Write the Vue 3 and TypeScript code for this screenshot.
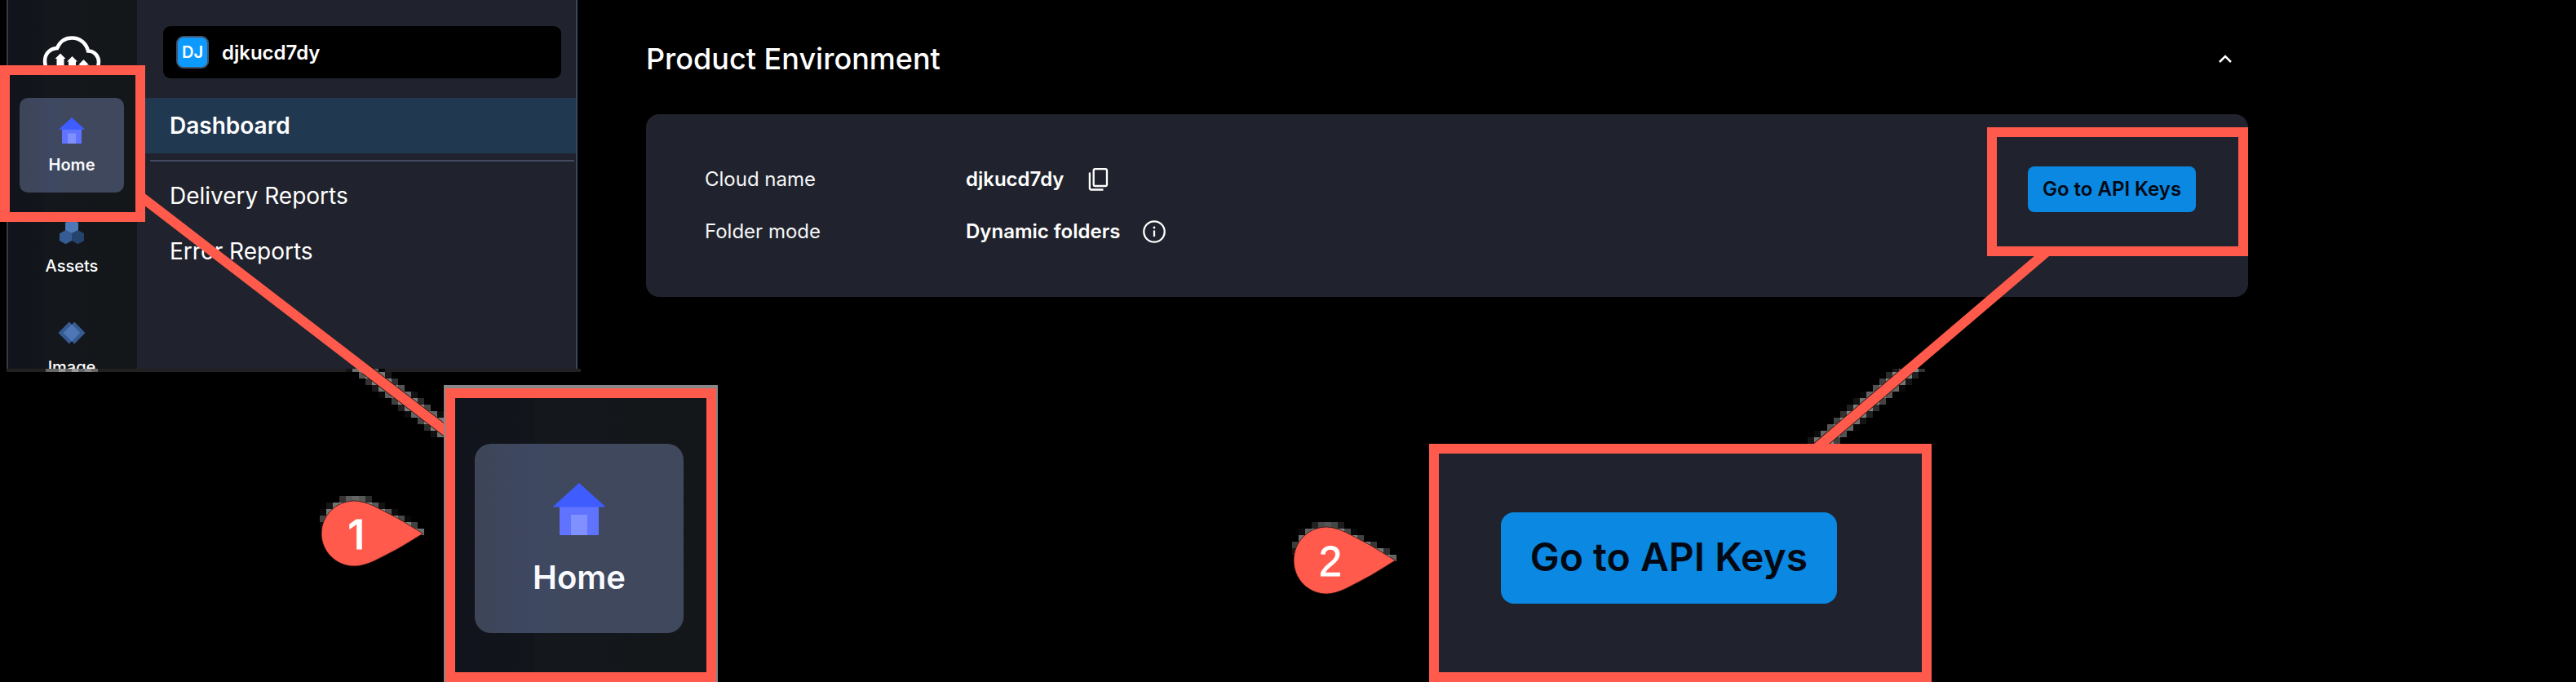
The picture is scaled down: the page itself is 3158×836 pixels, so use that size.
<script setup lang="ts">
interface Cell { x: number; y: number; h: number; fill: string }
interface Point { x: number; y: number }

const navItems = ['Home', 'Assets', 'Image']
const reports = ['Delivery Reports', 'Error Reports']
const leftLine: [Point, Point] = [{ x: 172, y: 240.4 }, { x: 552, y: 532.6 }]
const rightLine: [Point, Point] = [{ x: 2510, y: 308 }, { x: 2226, y: 550 }]

// Builds an 8px mosaic halo from the area each cell shares with a shape.
function mosaic(x0: number, y0: number, x1: number, y1: number, top: number, inside: (x: number, y: number) => boolean): Cell[] {
  const cells: Cell[] = []
  for (let y = y0; y < y1; y += 8) {
    for (let x = x0; x < x1; x += 8) {
      let hits = 0
      for (let i = 0.5; i < 8; i++) for (let j = 0.5; j < 8; j++) if (inside(x + i, y + j)) hits++
      if (hits < 3) continue
      const v = Math.round((hits / 64) * 136)
      const cy = Math.max(y, top)
      cells.push({ x, y: cy, h: y + 8 - cy, fill: `rgb(${v},${v},${v})` })
    }
  }
  return cells
}
function nearLine([a, b]: [Point, Point], half: number) {
  const dx = b.x - a.x
  const dy = b.y - a.y
  const len = Math.hypot(dx, dy)
  return (x: number, y: number) => Math.abs((x - a.x) * dy - (y - a.y) * dx) / len < half
}
function nearPin(cx: number, cy: number) {
  return (x: number, y: number) => {
    const dx = x - cx
    const dy = Math.abs(y - cy)
    if (dx < -34 && y > cy - 12) return false
    if (dx < 20) return Math.hypot(dx, dy) < 43
    return dy < 43 - (dx - 8) * 0.53 && dx < 84
  }
}
const halo: Cell[] = [
  ...mosaic(424, 448, 544, 544, 452, nearLine(leftLine, 9)),
  ...mosaic(2208, 448, 2368, 544, 452, nearLine(rightLine, 9)),
  ...mosaic(384, 608, 528, 656, 608, nearPin(435.5, 653)),
  ...mosaic(1576, 640, 1720, 688, 640, nearPin(1627.5, 686))
]
</script>

<template>
  <div class="stage">
    <aside class="sidebar">
      <div class="columns">
        <nav class="rail">
          <svg class="logo" viewBox="0 0 72 48">
            <path d="M14 46C7 44 3 38.500 3 31C3 22 9 15.500 18 15C21.500 7 28 2.500 36 2.500C47 2.500 54 10 56 18.500C64 18.500 69 25 69 32C69 39 65 44 59 46" />
            <path class="solid" d="M15.500 28L22 21.500L28.500 28H26.500V48H17.500V28ZM30 31.500L36.500 25L43 31.500H41V48H32V31.500ZM44 35.500L50.500 29L57 35.500H55V48H46V35.500Z" />
          </svg>
          <div v-for="item in navItems" :key="item" class="item" :class="{ active: item === 'Home' }">
            <svg v-if="item === 'Home'" class="icon" viewBox="0 0 34 34">
              <path fill="#5f73ff" d="M5 15H29V33H5Z" /><path fill="#3f5cff" d="M17 1L33.300 15.800H.7Z" /><path fill="#8090ff" d="M12 20.500H22V33H12Z" />
            </svg>
            <svg v-else-if="item === 'Assets'" class="icon" viewBox="0 0 34 34">
              <path fill="#355c93" d="M9.500 15L17 19.200V28L9.500 32.200L2 28V19.200Z" /><path fill="#24446b" d="M24.500 15L32 19.200V28L24.500 32.200L17 28V19.200Z" /><path fill="#4f78b8" d="M17 1.500L25 6V15L17 19L9 15V6Z" />
            </svg>
            <svg v-else class="icon" viewBox="0 0 34 34">
              <path fill="#365b93" d="M13.800 3.500L27 17L13.800 30.500L.5 17ZM20.200 3.500L33.500 17L20.200 30.500L7 17Z" /><path fill="#4f76b5" d="M17 6.500L27.300 17L17 27.500L6.700 17Z" />
            </svg>
            <span class="t">{{ item }}</span>
          </div>
        </nav>
        <div class="menu">
          <div class="account"><b class="badge"><span class="t">DJ</span></b><span class="t">djkucd7dy</span></div>
          <div class="row selected"><span class="t">Dashboard</span></div>
          <div class="divider"></div>
          <div v-for="r in reports" :key="r" class="row"><span class="t">{{ r }}</span></div>
        </div>
      </div>
      <div class="edge"><i v-for="n in 8" :key="n"></i></div>
    </aside>

    <main class="content">
      <header>
        <h1 class="t">Product Environment</h1>
        <svg class="chevron" viewBox="0 0 16 10"><path d="M1 9L8 2L15 9" /></svg>
      </header>
      <section class="card">
        <dl>
          <dt><span class="t">Cloud name</span></dt>
          <dd>
            <span class="t">djkucd7dy</span>
            <svg class="copy" viewBox="0 0 28 28"><rect x="7.700" y="1.200" width="16.300" height="20.800" rx="1.800" /><path d="M2.900 5.500V24.500Q2.900 26.500 4.900 26.500H19.500" /></svg>
          </dd>
          <dt><span class="t">Folder mode</span></dt>
          <dd>
            <span class="t">Dynamic folders</span>
            <svg class="info" viewBox="0 0 28 28"><circle cx="14" cy="14" r="12.700" /><path d="M14 12.500V20" /><circle class="dot" cx="14" cy="9" r="1.400" /></svg>
          </dd>
        </dl>
        <button class="keys"><span class="t">Go to API Keys</span></button>
      </section>
    </main>

    <svg class="overlay" viewBox="0 0 3158 836">
      <rect v-for="(c, i) in halo" :key="i" :x="c.x" :y="c.y" width="8" :height="c.h" :fill="c.fill" shape-rendering="crispEdges" />
      <path class="rim" d="M448 452.600L552 532.600M2341 452L2226 550" />
      <path class="line" d="M172 240.400L552 532.600M2510 308L2226 550" />
      <path class="pin" d="M518.500 654Q488 674 458 688Q444 694 434.500 694C412 694 394 676 394 654S412 614 434.500 614Q444 614 458 620Q488 634 518.500 654Z" />
      <path class="pin" d="M1710.500 687Q1680 707 1650 721.500Q1636 728 1626.500 728C1604 728 1586 710 1586 687S1604 646 1626.500 646Q1636 646 1650 652.500Q1680 667 1710.500 687Z" />
      <text class="num one" x="437" y="673">1</text>
      <text class="num" x="1631" y="706">2</text>
    </svg>
    <div class="frame home-frame"></div>
    <div class="frame keys-frame"></div>
    <div class="frame home-zoom">
      <div class="item active big">
        <svg class="icon" viewBox="0 0 34 34">
          <path fill="#5f73ff" d="M5 15H29V33H5Z" /><path fill="#3f5cff" d="M17 1L33.300 15.800H.7Z" /><path fill="#8090ff" d="M12 20.500H22V33H12Z" />
        </svg>
        <span class="t">Home</span>
      </div>
    </div>
    <div class="frame keys-zoom"><button class="keys big"><span class="t">Go to API Keys</span></button></div>
  </div>
</template>

<style>
body { margin: 0; background: #000; }
</style>
<style scoped>
* { box-sizing: border-box; }
.stage { position: relative; width: 3158px; height: 836px; overflow: hidden; background: #000; color: #fff; font-family: Inter, "Liberation Sans", sans-serif; display: flex; }
.t { white-space: nowrap; }
.sidebar { width: 704px; margin-left: 8px; flex: none; }
.columns { display: flex; height: 452px; width: 700px; overflow: hidden; border-left: 2px solid #38393d; border-right: 2px solid #3d455b; }
.rail { width: 158px; flex: none; display: flex; flex-direction: column; align-items: center; gap: 8px; padding-top: 44px; background: linear-gradient(90deg, #11141c, #12151b 27%, #14171b 28%, #14171a); }
.logo { width: 72px; height: 48px; flex: none; margin: 0 0 20px -2px; fill: none; stroke: #fff; stroke-width: 4.500; }
.logo .solid { fill: #fff; stroke: none; }
.item { width: 128px; height: 116px; flex: none; margin-right: 2px; border-radius: 10px; display: flex; flex-direction: column; align-items: center; font-size: 20px; font-weight: 500; line-height: 24px; padding-top: 23px; gap: 13px; }
.item.active { background: linear-gradient(90deg, #3d4557, #3e4862 30%, #3f485c 45%); color: #f8f9fc; font-weight: 600; }
.icon { width: 34px; height: 34px; flex: none; }
.menu { flex: 1; background: #20232d; padding-top: 32px; }
.account { width: 488px; height: 64px; margin: 0 0 24px 32px; border-radius: 9px; background: #000; display: flex; align-items: center; gap: 16px; padding-left: 16px; font-size: 24px; font-weight: 600; }
.badge { width: 40px; height: 40px; border-radius: 9px; border: 2px solid #44546b; background: #0d9aff; display: flex; align-items: center; justify-content: center; font-size: 20px; font-weight: 600; }
.row { height: 68px; padding-left: 40px; display: flex; align-items: center; font-size: 28px; }
.selected { background: #203850; font-weight: 600; }
.divider { height: 2px; margin: 8px 2px 8px 16px; background: #434a62; }
.edge { height: 4px; background: #212121; display: flex; padding-left: 48px; }
.edge i { width: 8px; height: 4px; background: #666; }
.edge i:nth-child(3), .edge i:nth-child(5) { background: #989898; }
.edge i:nth-child(7) { background: #858585; }
.content { width: 1964px; margin-left: 80px; flex: none; }
header { height: 140px; display: flex; justify-content: space-between; padding: 50px 20px 0 0; }
h1 { margin: 0; font-size: 36px; line-height: 44px; font-weight: 500; }
.chevron { width: 16px; height: 10px; margin-top: 17px; fill: none; stroke: #fff; stroke-width: 2.500; }
.card { height: 224px; border-radius: 16px; background: #20232d; display: flex; justify-content: space-between; align-items: flex-start; padding: 64px 64px 0 72px; }
dl { margin: -16px 0 0; display: grid; grid-template-columns: 320px auto; grid-auto-rows: 64px; align-items: center; font-size: 24px; }
dl .t { padding-bottom: 1px; }
dt { color: #f5f6f8; padding-bottom: 1px; }
dd { margin: 0; display: flex; align-items: center; gap: 28px; font-weight: 600; }
.copy, .info { width: 28px; height: 28px; fill: none; stroke: #fff; stroke-width: 2.300; }
.copy { margin-left: 1px; }
.info .dot { fill: #fff; stroke: none; }
.keys { width: 206px; height: 56px; padding: 0 0 2px; border: 0; border-radius: 8px; background: #0a88e2; color: #030913; font: 600 24px Inter, sans-serif; display: flex; align-items: center; justify-content: center; }
.overlay { position: absolute; inset: 0; width: 3158px; height: 836px; }
.line { fill: none; stroke: #ff5a4b; stroke-width: 12; }
.rim { fill: none; stroke: #24100e; stroke-width: 13.500; }
.pin { fill: #ff5a4b; stroke: #24100e; stroke-width: .8; }
.num { fill: #fff; font: 51px "Liberation Sans", sans-serif; text-anchor: middle; stroke: #fff; stroke-width: .8; }
.one { font-family: Inter, sans-serif; font-size: 50px; font-weight: 500; }
.frame { position: absolute; border: 12px solid #ff5a4b; }
.home-frame { left: 0; top: 80px; width: 178px; height: 192px; }
.keys-frame { left: 2436px; top: 156px; width: 320px; height: 158px; }
.home-zoom { left: 546px; top: 476px; width: 332px; height: 360px; box-shadow: 0 -2px 0 2px #888; background: linear-gradient(90deg, #11141c, #12151b 31%, #14171b 32%, #14171a); padding: 56px 0 0 24px; }
.keys-zoom { left: 1752px; top: 544px; width: 616px; height: 292px; background: #20232d; padding: 72px 0 0 76px; }
.item.big { width: 256px; height: 232px; border-radius: 20px; font-size: 40px; line-height: 48px; padding-top: 46px; gap: 26px; }
.big .icon { width: 68px; height: 68px; }
.keys.big { width: 412px; height: 112px; border-radius: 16px; font-size: 48px; padding-bottom: 3px; }
</style>
